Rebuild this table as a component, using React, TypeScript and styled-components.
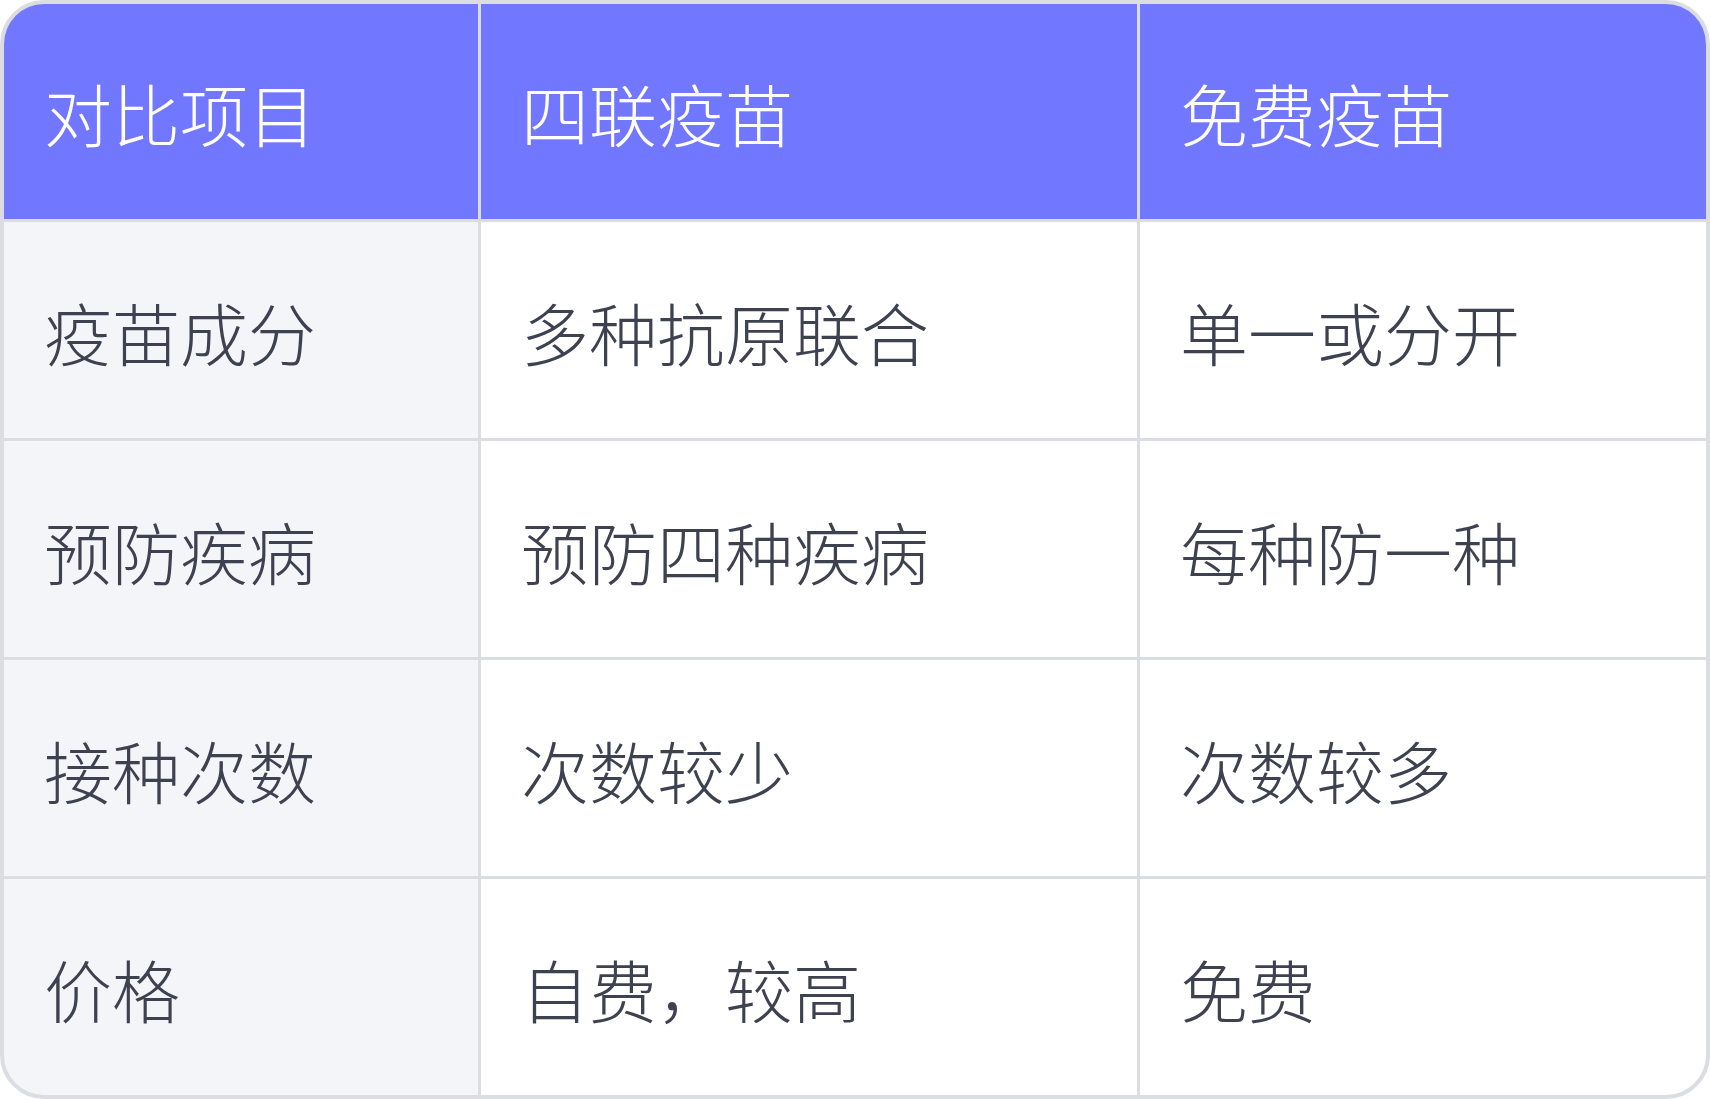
import styled, { createGlobalStyle } from "styled-components"

const GlobalStyle = createGlobalStyle`
  html, body {
    margin: 0;
    padding: 0;
    background: #ffffff;
  }
`

const header = ["对比项目", "四联疫苗", "免费疫苗"]

const rows = [
  ["疫苗成分", "多种抗原联合", "单一或分开"],
  ["预防疾病", "预防四种疾病", "每种防一种"],
  ["接种次数", "次数较少", "次数较多"],
  ["价格", "自费，较高", "免费"],
]

export default function App() {
  return <>
    <GlobalStyle />
    <Table>
      {header.map((h) => <HeadCell key={h}>{h}</HeadCell>)}
      {rows.map((row) =>
        row.map((text, i) => <Cell key={row[0] + i} $label={i === 0}>{text}</Cell>)
      )}
    </Table>
  </>
}

const Table = styled.div`
  width: 1710px;
  height: 1099px;
  box-sizing: border-box;
  border: 4px solid #dcdde2;
  border-radius: 44px;
  overflow: hidden;
  background: #dcdde2;

  display: grid;
  grid-template-columns: 474px 656px 1fr;
  grid-template-rows: 215px repeat(4, 216px);
  gap: 3px;

  font-family: "Noto Sans CJK SC", "Noto Sans", sans-serif;
  font-size: 68px;
  font-weight: 300;
`

const HeadCell = styled.div`
  background: #7177ff;
  color: #ffffff;
  display: flex;
  align-items: center;
  padding: 2px 40px 0;
`

const Cell = styled.div<{ $label?: boolean }>`
  background: ${(p) => (p.$label ? "#f4f5f9" : "#ffffff")};
  color: #3e4250;
  display: flex;
  align-items: center;
  padding: 2px 40px 0;
`
